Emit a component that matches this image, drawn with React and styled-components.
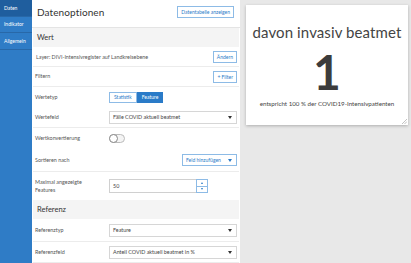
import React from 'react';
import styled, { createGlobalStyle } from 'styled-components';

const GlobalStyle = createGlobalStyle`
  html, body {
    margin: 0;
    padding: 0;
    background: #e8e8e8;
    font-family: Lato, "Open Sans", "Liberation Sans", sans-serif;
  }
  * { box-sizing: border-box; }
`;

const blue = '#2a7bc8';
const lightBlue = '#8dbbe6';

const App = () => {
  return (
    <>
      <GlobalStyle />
      <Page>
        <Sidebar>
          <SideItem active>Daten</SideItem>
          <SideItem>Indikator</SideItem>
          <SideItem>Allgemein</SideItem>
        </Sidebar>

        <Panel>
          <PanelHeader>
            <PanelTitle>Datenoptionen</PanelTitle>
            <OutlineButton>Datentabelle anzeigen</OutlineButton>
          </PanelHeader>

          <PanelBody>
            <SectionHeader>Wert</SectionHeader>

            <Row height={20} bordered>
              <LayerText>Layer: DIVI-Intensivregister auf Landkreisebene</LayerText>
              <OutlineButton>Ändern</OutlineButton>
            </Row>

            <Row height={20} bordered>
              <Label>Filtern</Label>
              <Spacer />
              <OutlineButton>+ Filter</OutlineButton>
            </Row>

            <Group>
              <Row height={20}>
                <Label>Wertetyp</Label>
                <Segmented>
                  <SegButton>Statistik</SegButton>
                  <SegButton active>Feature</SegButton>
                </Segmented>
              </Row>
              <Row height={20}>
                <Label>Wertefeld</Label>
                <Select>
                  <span>Fälle COVID aktuell beatmet</span>
                  <Caret />
                </Select>
              </Row>
            </Group>

            <Group>
              <Row height={21}>
                <Label>Wertkonvertierung</Label>
                <Toggle><Knob /></Toggle>
              </Row>
              <Row height={22}>
                <Label>Sortieren nach</Label>
                <Spacer />
                <FieldDropdown>
                  <span>Feld hinzufügen</span>
                  <Caret color={blue} />
                </FieldDropdown>
              </Row>
            </Group>

            <Row height={28}>
              <Label>Maximal angezeigte<br />Features</Label>
              <NumberBox>
                <NumberInput>50</NumberInput>
                <Spinner>
                  <SpinBtn><SmallCaret up /></SpinBtn>
                  <SpinBtn><SmallCaret /></SpinBtn>
                </Spinner>
              </NumberBox>
            </Row>

            <SectionHeader>Referenz</SectionHeader>

            <Row height={23} bordered>
              <Label>Referenztyp</Label>
              <Select>
                <span>Feature</span>
                <Caret />
              </Select>
            </Row>
            <Row height={21} bordered>
              <Label>Referenzfeld</Label>
              <Select>
                <span>Anteil COVID aktuell beatmet in %</span>
                <Caret />
              </Select>
            </Row>
          </PanelBody>
        </Panel>

        <Canvas>
          <Card>
            <CardTitle>davon invasiv beatmet</CardTitle>
            <BigValue>1</BigValue>
            <CardNote>entspricht 100 % der COVID19-Intensivpatienten</CardNote>
            <ResizeHandle viewBox="0 0 6 6">
              <line x1="1" y1="6" x2="6" y2="1" stroke="#999" strokeWidth="0.6" />
              <line x1="3.5" y1="6" x2="6" y2="3.5" stroke="#999" strokeWidth="0.6" />
            </ResizeHandle>
          </Card>
        </Canvas>
      </Page>
    </>
  );
};

const Page = styled.div`
  display: flex;
  width: 411px;
  height: 263px;
  overflow: hidden;
  background: #e8e8e8;
`;

const Sidebar = styled.div`
  width: 32px;
  flex-shrink: 0;
  background: #2f7cc6;
  display: flex;
  flex-direction: column;
`;

const SideItem = styled.div`
  height: 16.5px;
  display: flex;
  align-items: center;
  padding-left: 4px;
  font-size: 5px;
  color: #fff;
  background: ${(p) => (p.active ? '#1f5e9e' : 'transparent')};
  border-bottom: 1px solid #2868a8;
`;

const Panel = styled.div`
  width: 208px;
  flex-shrink: 0;
  background: #fff;
  display: flex;
  flex-direction: column;
`;

const PanelHeader = styled.div`
  height: 28px;
  flex-shrink: 0;
  display: flex;
  align-items: center;
  justify-content: space-between;
  padding: 0 6px 3px 5px;
  border-bottom: 1px solid #e4e4e4;
`;

const PanelTitle = styled.div`
  font-size: 10px;
  color: #333;
  letter-spacing: 0.1px;
`;

const PanelBody = styled.div`
  display: flex;
  flex-direction: column;
  padding: 0 1px 0 1px;
`;

const SectionHeader = styled.div`
  height: 19px;
  flex-shrink: 0;
  display: flex;
  align-items: center;
  padding-left: 4px;
  background: #f4f4f4;
  font-size: 7.5px;
  color: #333;
`;

const Row = styled.div`
  height: ${(p) => p.height}px;
  flex-shrink: 0;
  display: flex;
  align-items: center;
  padding: 0 2px 0 2px;
  border-bottom: ${(p) => (p.bordered ? '1px solid #ececec' : 'none')};
`;

const Group = styled.div`
  display: flex;
  flex-direction: column;
  border-bottom: 1px solid #ececec;
`;

const Label = styled.div`
  width: 74px;
  flex-shrink: 0;
  font-size: 5.4px;
  line-height: 8.5px;
  color: #555;
`;

const LayerText = styled.div`
  flex: 1;
  font-size: 5.4px;
  color: #555;
  padding-left: 1px;
`;

const Spacer = styled.div`
  flex: 1;
`;

const OutlineButton = styled.div`
  height: 12px;
  display: flex;
  align-items: center;
  padding: 0 3px;
  border: 1px solid ${lightBlue};
  color: ${blue};
  font-size: 5px;
  background: #fff;
  white-space: nowrap;
`;

const Segmented = styled.div`
  display: flex;
  height: 11px;
`;

const SegButton = styled.div`
  display: flex;
  align-items: center;
  padding: 0 4px;
  font-size: 5px;
  border: 1px solid ${(p) => (p.active ? blue : lightBlue)};
  background: ${(p) => (p.active ? blue : '#fff')};
  color: ${(p) => (p.active ? '#fff' : blue)};
`;

const Select = styled.div`
  flex: 1;
  height: 13px;
  display: flex;
  align-items: center;
  justify-content: space-between;
  padding: 0 4px 0 3px;
  border: 1px solid #d6d6d6;
  font-size: 5.4px;
  color: #444;
`;

const Caret = styled.div`
  width: 0;
  height: 0;
  border-left: 2.5px solid transparent;
  border-right: 2.5px solid transparent;
  border-top: 3px solid ${(p) => p.color || '#333'};
`;

const Toggle = styled.div`
  width: 16px;
  height: 9px;
  border: 1px solid #bbb;
  border-radius: 5px;
  background: #f4f4f4;
  display: flex;
  align-items: center;
`;

const Knob = styled.div`
  width: 9px;
  height: 9px;
  border-radius: 50%;
  border: 1px solid #888;
  background: #fff;
  margin-left: -1px;
`;

const FieldDropdown = styled.div`
  width: 55px;
  height: 12px;
  display: flex;
  align-items: center;
  justify-content: space-between;
  padding: 0 4px 0 3px;
  border: 1px solid ${lightBlue};
  color: ${blue};
  font-size: 5px;
`;

const NumberBox = styled.div`
  display: flex;
  height: 14px;
`;

const NumberInput = styled.div`
  width: 87px;
  border: 1px solid #d0d0d0;
  border-right: none;
  display: flex;
  align-items: center;
  padding-left: 3px;
  font-size: 5.4px;
  color: #444;
`;

const Spinner = styled.div`
  width: 12px;
  display: flex;
  flex-direction: column;
  border: 1px solid ${lightBlue};
`;

const SpinBtn = styled.div`
  flex: 1;
  display: flex;
  align-items: center;
  justify-content: center;
  & + & {
    border-top: 1px solid ${lightBlue};
  }
`;

const SmallCaret = styled.div`
  width: 0;
  height: 0;
  border-left: 1.5px solid transparent;
  border-right: 1.5px solid transparent;
  ${(p) => (p.up ? `border-bottom: 2px solid ${blue};` : `border-top: 2px solid ${blue};`)}
`;

const Canvas = styled.div`
  flex: 1;
  padding: 5px 3px 0 6px;
`;

const Card = styled.div`
  position: relative;
  width: 162px;
  height: 120px;
  background: #fff;
  box-shadow: 0 1px 3px rgba(0, 0, 0, 0.25);
  display: flex;
  flex-direction: column;
  align-items: center;
  padding-top: 17px;
`;

const CardTitle = styled.div`
  font-size: 15px;
  color: #444;
  line-height: 20px;
  letter-spacing: 0.1px;
`;

const BigValue = styled.div`
  font-size: 48px;
  font-weight: 700;
  color: #3c3c3c;
  line-height: 48px;
  margin-top: 6px;
`;

const CardNote = styled.div`
  font-size: 6.2px;
  color: #444;
  margin-top: 4px;
`;

const ResizeHandle = styled.svg`
  position: absolute;
  right: 1px;
  bottom: 1px;
  width: 6px;
  height: 6px;
`;

export default App;
